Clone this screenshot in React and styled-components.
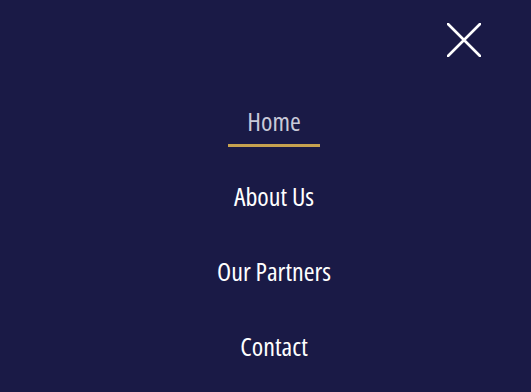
import React from "react";
import styled, { createGlobalStyle } from "styled-components";

const GlobalStyle = createGlobalStyle`
  html, body {
    margin: 0;
    padding: 0;
    background: #1a1a46;
  }
  body {
    font-family: "Open Sans", "DejaVu Sans Condensed", sans-serif;
  }
`;

const items = ["Home", "About Us", "Our Partners", "Contact"];

function App() {
  return (
    <MenuStyled>
      <GlobalStyle />
      <div className="top-bar">
        <CloseButton aria-label="Close menu">
          <svg width="34" height="34" viewBox="0 0 34 34">
            <path d="M1 1 L33 33 M33 1 L1 33" stroke="#fff" strokeWidth="2.6" strokeLinecap="round" />
          </svg>
        </CloseButton>
      </div>
      <NavList>
        {items.map((item, i) => (
          <NavItem key={item} $active={i === 0}>
            {item}
          </NavItem>
        ))}
      </NavList>
    </MenuStyled>
  );
}

const MenuStyled = styled.div`
  width: 531px;
  height: 392px;
  background: #1a1a46;
  overflow: hidden;
  .top-bar {
    display: flex;
    justify-content: flex-end;
    padding: 23px 50px 0 0;
    height: 57px;
  }
`;

const CloseButton = styled.button`
  width: 34px;
  height: 34px;
  padding: 0;
  border: none;
  background: none;
  cursor: pointer;
  display: flex;
  svg {
    display: block;
  }
`;

const NavList = styled.nav`
  margin-top: 26px;
  padding-left: 17px;
  display: flex;
  flex-direction: column;
  align-items: center;
  gap: 34px;
`;

const NavItem = styled.a`
  display: block;
  font-size: 26px;
  font-weight: 500;
  font-stretch: 75%;
  line-height: 30px;
  padding: 0 19px 8px;
  color: ${(p) => (p.$active ? "#c9cad9" : "#ffffff")};
  border-bottom: 3px solid ${(p) => (p.$active ? "#c6a24f" : "transparent")};
  text-decoration: none;
  cursor: pointer;
`;

export default App;
